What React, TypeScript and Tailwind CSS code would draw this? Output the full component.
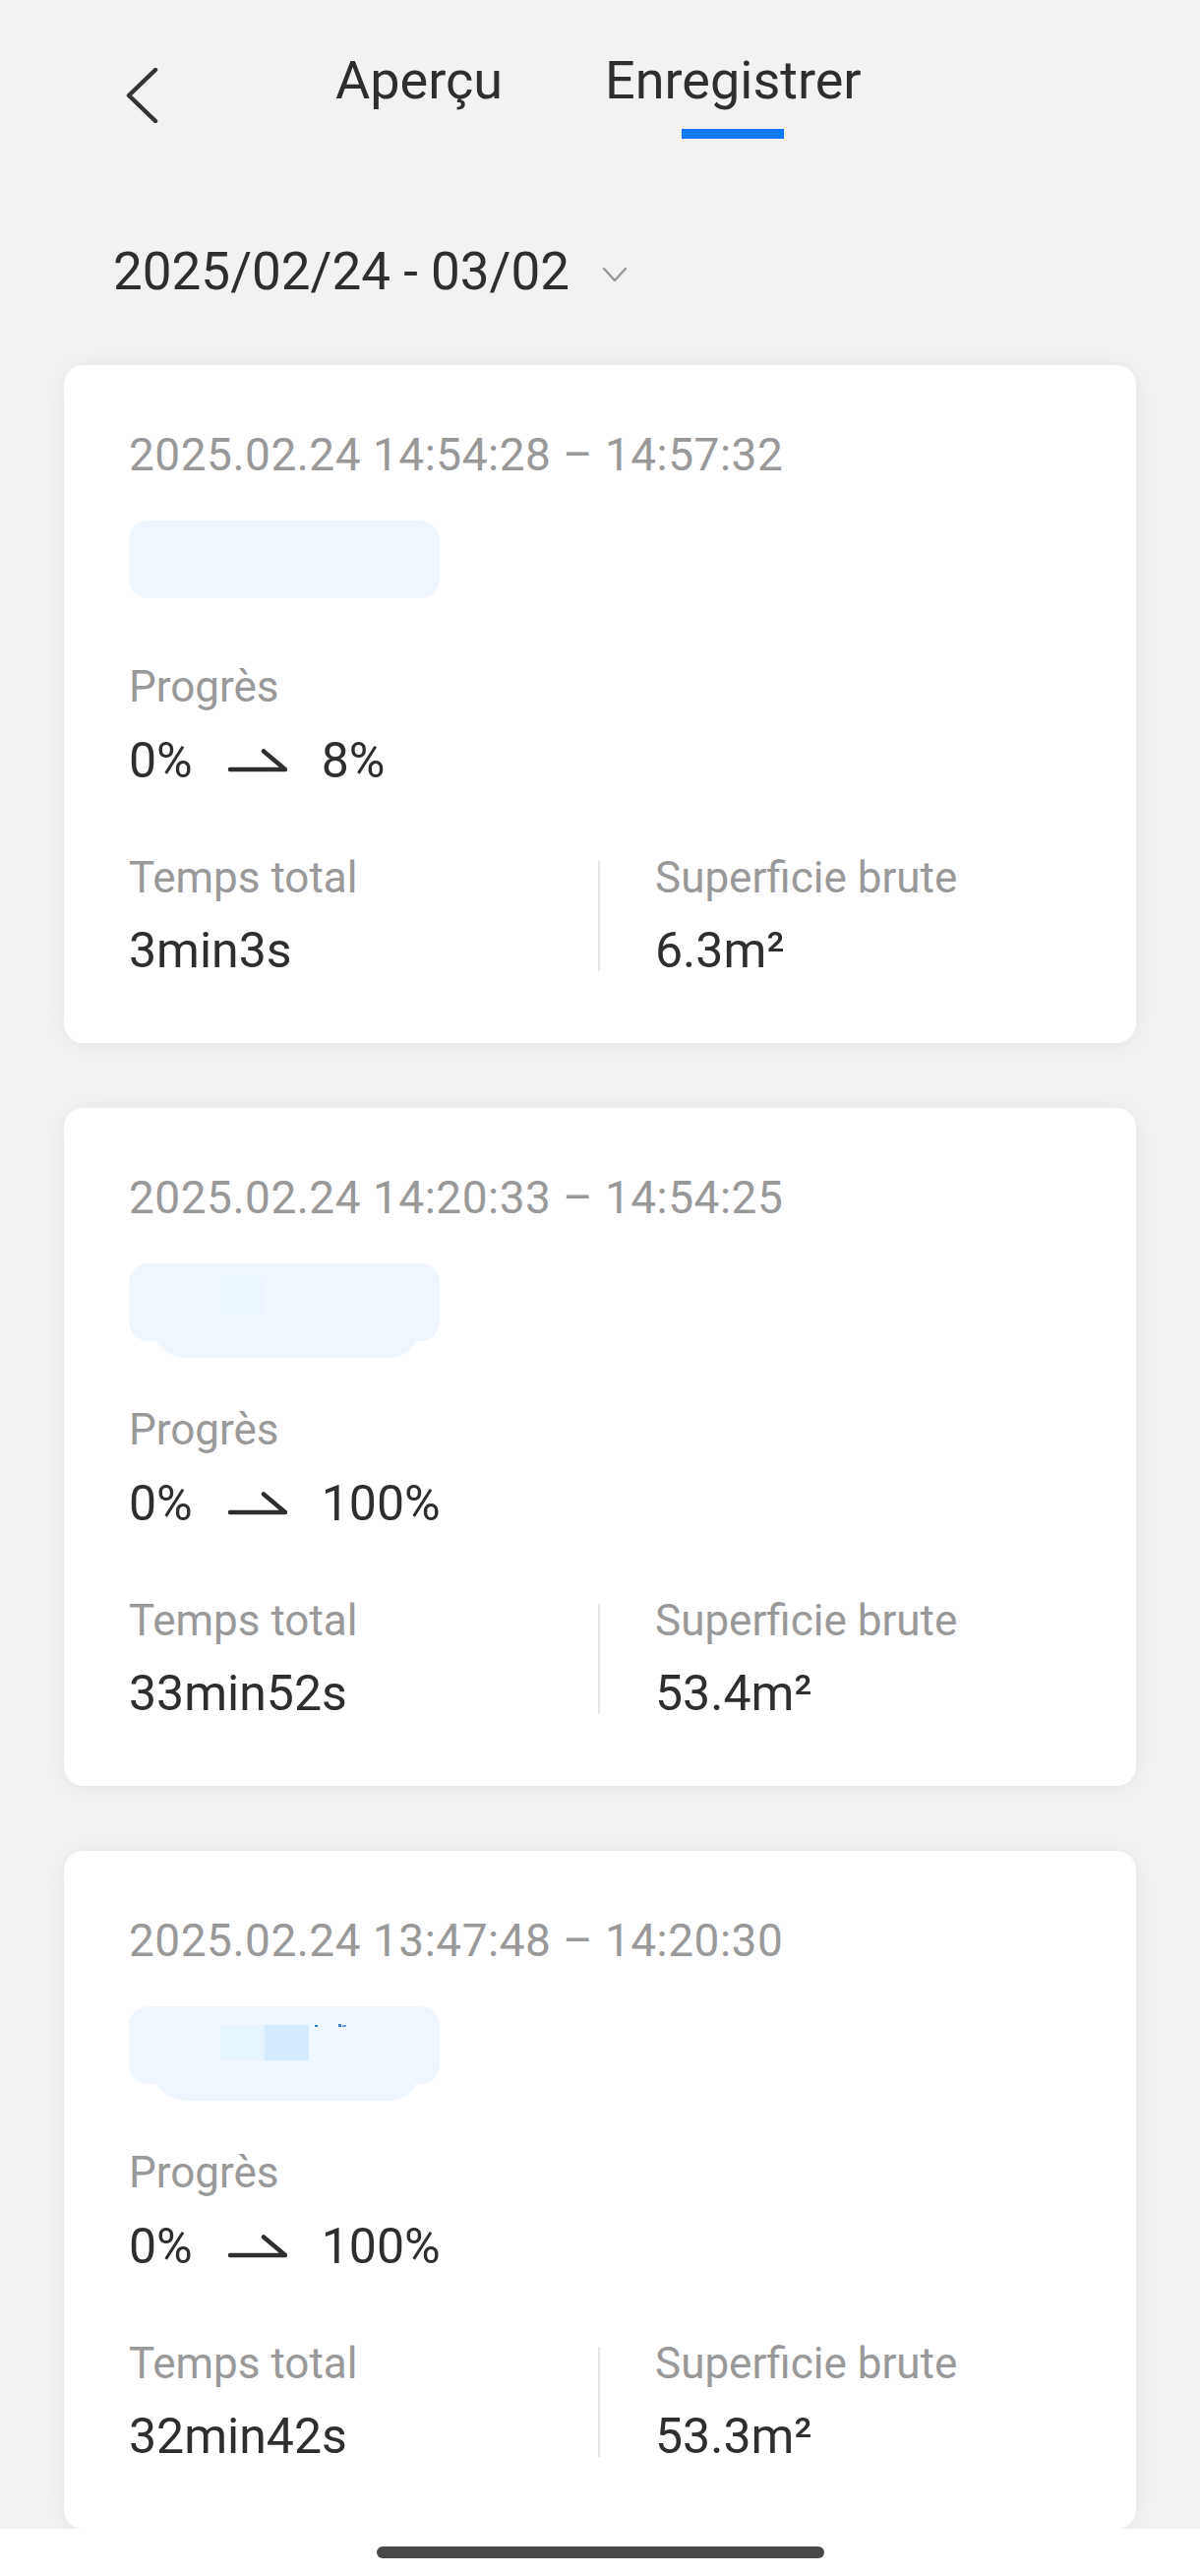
import React from "react";

type Rec = {
  time: string;
  from: string;
  to: string;
  total: string;
  area: string;
  variant: 1 | 2 | 3;
};

const records: Rec[] = [
  { time: "2025.02.24 14:54:28 – 14:57:32", from: "0%", to: "8%", total: "3min3s", area: "6.3", variant: 1 },
  { time: "2025.02.24 14:20:33 – 14:54:25", from: "0%", to: "100%", total: "33min52s", area: "53.4", variant: 2 },
  { time: "2025.02.24 13:47:48 – 14:20:30", from: "0%", to: "100%", total: "32min42s", area: "53.3", variant: 3 },
];

function Blur({ variant }: { variant: 1 | 2 | 3 }) {
  return (
    <div className="relative h-[79px] w-[316px] mt-[39px]">
      {variant !== 1 && (
        <div className="absolute left-[20px] top-[40px] h-[56px] w-[275px] rounded-b-[40px] rounded-br-[30px] bg-[#eff6fd]" />
      )}
      <div className="absolute inset-0 rounded-[20px] bg-[#eff6fd]" />
      {variant === 2 && (
        <div className="absolute left-[93px] top-[14px] h-[37px] w-[45px] bg-[#eaf5fd]" />
      )}
      {variant === 3 && (
        <>
          <div className="absolute left-[93px] top-[19px] h-[36px] w-[45px] bg-[#e6f4fd]" />
          <div className="absolute left-[138px] top-[19px] h-[36px] w-[45px] bg-[#d5ebfc]" />
          <div className="absolute left-[189px] top-[19px] h-[2px] w-[3px] bg-[#3a7fd0]" />
          <div className="absolute left-[213px] top-[18px] h-[3px] w-[3px] bg-[#3a7fd0]" />
          <div className="absolute left-[217px] top-[19px] h-[2px] w-[4px] bg-[#6aa0e0]" />
        </>
      )}
    </div>
  );
}

function Card({ r }: { r: Rec }) {
  return (
    <div className="mx-[65px] rounded-[20px] bg-white pt-[63px] pb-[64px] px-[66px] shadow-[0_2px_28px_rgba(0,0,0,0.06)]">
      <div className="text-[46px] leading-[56px] tracking-[0.5px] text-[#999999] whitespace-nowrap">{r.time}</div>
      <Blur variant={r.variant} />
      <div className="mt-[63px] text-[44px] leading-[54px] text-[#999999]">Progrès</div>
      <div className="mt-[18px] flex items-center h-[60px] text-[50px] leading-[60px] text-[#2e2e2e]">
        <span>{r.from}</span>
        <svg className="ml-[36px] mr-[35px]" width="60" height="24" viewBox="0 0 60 24" fill="none">
          <path d="M2 21 H58 L36 2.5" stroke="#2e2e2e" strokeWidth="4.5" strokeLinecap="round" strokeLinejoin="round" />
        </svg>
        <span>{r.to}</span>
      </div>
      <div className="mt-[62px] flex">
        <div className="w-[477px]">
          <div className="text-[44px] leading-[54px] text-[#999999]">Temps total</div>
          <div className="mt-[17px] text-[50px] leading-[60px] text-[#2e2e2e]">{r.total}</div>
        </div>
        <div className="mt-[10px] h-[112px] w-[2px] bg-[#e6e6e6]" />
        <div className="pl-[56px]">
          <div className="text-[44px] leading-[54px] text-[#999999]">Superficie brute</div>
          <div className="mt-[17px] text-[50px] leading-[60px] text-[#2e2e2e]">
            {r.area}m²
          </div>
        </div>
      </div>
    </div>
  );
}

export default function App() {
  return (
    <div className="min-h-[2618px] w-[1220px] bg-[#f2f2f2] font-[Roboto,'Noto_Sans',sans-serif] flex flex-col">
      <div className="pt-[50px] flex items-start pl-[128px]">
        <svg className="mt-[19px]" width="34" height="56" viewBox="0 0 34 56" fill="none">
          <path d="M30 2 L3 28 L30 54" stroke="#333333" strokeWidth="4.5" strokeLinecap="round" strokeLinejoin="round" />
        </svg>
        <div className="ml-[179px] w-[274px] text-[54px] leading-[64px] text-[#2e2e2e]">Aperçu</div>
        <div className="flex flex-col items-center">
          <div className="text-[54px] leading-[64px] text-[#2e2e2e]">Enregistrer</div>
          <div className="mt-[17px] h-[10px] w-[104px] bg-[#0d7bff]" />
        </div>
      </div>
      <div className="mt-[104px] flex items-center pl-[115px] h-[62px]">
        <span className="text-[53px] leading-[62px] text-[#2e2e2e]">2025/02/24 - 03/02</span>
        <svg className="ml-[32px] mt-[6px]" width="28" height="20" viewBox="0 0 28 20" fill="none">
          <path d="M3 4 L14 16 L25 4" stroke="#9a9a9a" strokeWidth="2.5" strokeLinecap="round" strokeLinejoin="round" />
        </svg>
      </div>
      <div className="mt-[64px] flex flex-col gap-[66px]">
        {records.map((r, i) => (
          <Card key={i} r={r} />
        ))}
      </div>
      <div className="h-[48px] bg-white flex justify-center pt-[18px]">
        <div className="h-[12px] w-[455px] rounded-full bg-[#484848]" />
      </div>
    </div>
  );
}
